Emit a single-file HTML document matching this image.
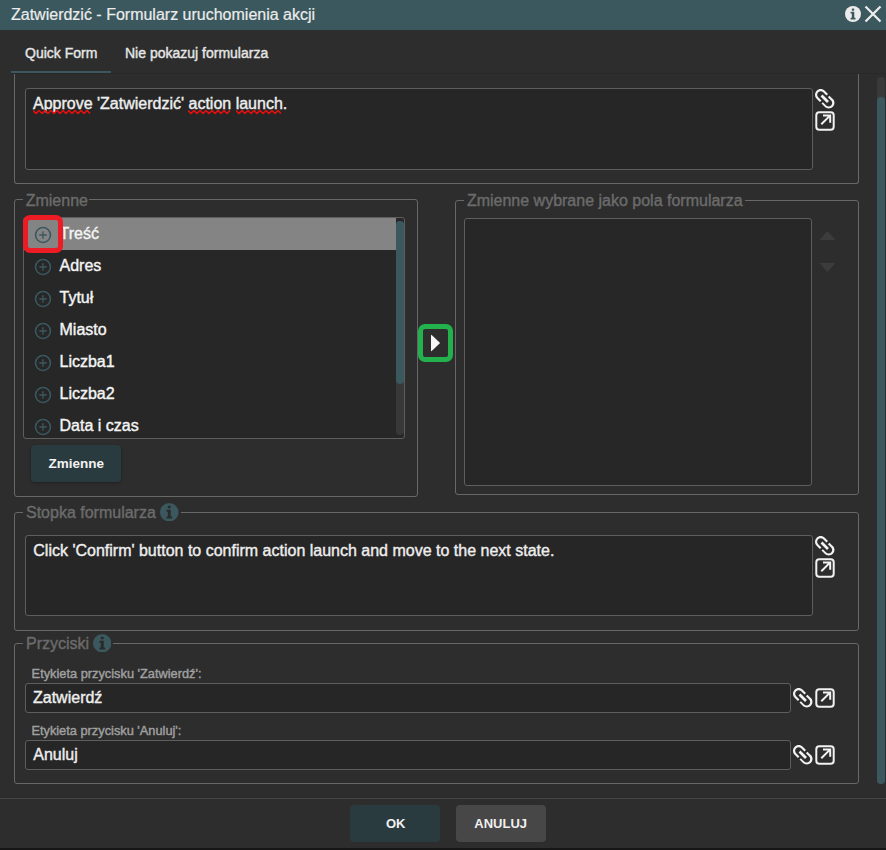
<!DOCTYPE html>
<html><head><meta charset="utf-8">
<style>
*{box-sizing:border-box;margin:0;padding:0}
html,body{width:886px;height:850px;overflow:hidden;background:#2d2d2d;font-family:"Liberation Sans",sans-serif}
body{position:relative}
.a{position:absolute;display:block}
.t{position:absolute;line-height:1;white-space:pre;-webkit-text-stroke:0.4px currentColor}
</style></head><body>
<div class="a" style="left:0px;top:0px;width:886px;height:30px;background:#3b585e"></div>
<div class="t" style="left:11px;top:7px;font-size:16px;color:#ececec;-webkit-text-stroke:0.2px">Zatwierdzić - Formularz uruchomienia akcji</div>
<svg class="a" style="left:845.0px;top:6.0px" width="16" height="16" viewBox="0 0 20 20"><circle cx="10" cy="10" r="10" fill="#ececec"/><g fill="#3b585e"><rect x="8.5" y="3" width="3" height="2.8" rx="0.6"/><path d="M7 7.3H11.6V14.6H13.1V16.8H7V14.6H8.5V9.4H7Z"/></g></svg>
<svg class="a" style="left:864px;top:5px" width="18" height="18" viewBox="0 0 18 18" stroke="#ececec" stroke-width="2.3"><path d="M1.5 1.5L16.5 16.5M16.5 1.5L1.5 16.5"/></svg>
<div class="t" style="left:25px;top:46px;font-size:14px;color:#e6e6e6;">Quick Form</div>
<div class="t" style="left:125px;top:46px;font-size:14px;color:#e6e6e6;">Nie pokazuj formularza</div>
<div class="a" style="left:11px;top:71px;width:100px;height:2px;background:#3b585e"></div>
<div class="a" style="left:11px;top:73px;width:875px;height:1px;background:#282828"></div>
<div class="a" style="left:14px;top:74px;width:845px;height:110px;border:1px solid #686868;border-top:none;border-radius:0 0 3px 3px"></div>
<div class="a" style="left:25px;top:88px;width:788px;height:82px;border:1px solid #5e5e5e;border-radius:3px;background:#262626;"></div>
<div class="t" style="left:33px;top:96px;font-size:16px;color:#eeeeee;">Approve 'Zatwierdzić' action launch.</div>
<svg class="a" style="left:33px;top:109.2px" width="61" height="6" viewBox="0 0 61 6"><path d="M0 1.5 L3 4.5 L6 1.5 L9 4.5 L12 1.5 L15 4.5 L18 1.5 L21 4.5 L24 1.5 L27 4.5 L30 1.5 L33 4.5 L36 1.5 L39 4.5 L42 1.5 L45 4.5 L48 1.5 L51 4.5 L54 1.5 L57 4.5" fill="none" stroke="#e8100f" stroke-width="1.6" stroke-linejoin="round"/></svg>
<svg class="a" style="left:188px;top:109.2px" width="46" height="6" viewBox="0 0 46 6"><path d="M0 1.5 L3 4.5 L6 1.5 L9 4.5 L12 1.5 L15 4.5 L18 1.5 L21 4.5 L24 1.5 L27 4.5 L30 1.5 L33 4.5 L36 1.5 L39 4.5 L42 1.5" fill="none" stroke="#e8100f" stroke-width="1.6" stroke-linejoin="round"/></svg>
<svg class="a" style="left:236px;top:109.2px" width="49" height="6" viewBox="0 0 49 6"><path d="M0 1.5 L3 4.5 L6 1.5 L9 4.5 L12 1.5 L15 4.5 L18 1.5 L21 4.5 L24 1.5 L27 4.5 L30 1.5 L33 4.5 L36 1.5 L39 4.5 L42 1.5 L45 4.5" fill="none" stroke="#e8100f" stroke-width="1.6" stroke-linejoin="round"/></svg>
<svg class="a" style="left:811.25px;top:85.25px" width="27.5" height="27.5" viewBox="0 0 24 24"><g transform="rotate(45 12 12)" fill="#f2f2f2"><path d="M3.9 12c0-1.71 1.39-3.1 3.1-3.1h4V7H7c-2.76 0-5 2.24-5 5s2.24 5 5 5h4v-1.9H7c-1.71 0-3.1-1.39-3.1-3.1zM8 13.2h8v-2.4H8v2.4zm9-6h-4v1.9h4c1.71 0 3.1 1.39 3.1 3.1s-1.39 3.1-3.1 3.1h-4V17h4c2.76 0 5-2.24 5-5s-2.24-5-5-5z"/></g></svg>
<svg class="a" style="left:815px;top:111px" width="20" height="20" viewBox="0 0 20 20" fill="none" stroke="#f2f2f2" stroke-width="2"><rect x="1.3" y="1.3" width="17.4" height="17.4" rx="3"/><path d="M6.3 13.3L15 4.6M8 4.6H15.2V11.8" stroke-width="2"/></svg>
<div class="a" style="left:14px;top:199px;width:404px;height:298px;border:1px solid #686868;border-radius:3px;"></div>
<div class="a" style="left:23px;top:194px;width:66px;height:13px;background:#2d2d2d"></div>
<div class="t" style="left:25.7px;top:193px;font-size:16px;color:#6b6b6b;">Zmienne</div>
<div class="a" style="left:23px;top:217px;width:382px;height:222px;border:1px solid #5e5e5e;border-radius:3px;background:#262626;background:#272727"></div>
<div class="a" style="left:24px;top:218px;width:372px;height:32px;background:#848484"></div>
<svg class="a" style="left:34.1px;top:225.6px" width="18" height="18" viewBox="0 0 18 18" fill="none" stroke="#3b585e" stroke-width="1.6"><circle cx="9" cy="9" r="7.45"/><path d="M5.2 9H12.8M9 5.2V12.8" stroke-width="1.35"/></svg>
<div class="t" style="left:59.5px;top:226px;font-size:16px;color:#f4f4f4;">Treść</div>
<svg class="a" style="left:34.1px;top:257.6px" width="18" height="18" viewBox="0 0 18 18" fill="none" stroke="#3b585e" stroke-width="1.6"><circle cx="9" cy="9" r="7.45"/><path d="M5.2 9H12.8M9 5.2V12.8" stroke-width="1.35"/></svg>
<div class="t" style="left:59.5px;top:258px;font-size:16px;color:#f4f4f4;">Adres</div>
<svg class="a" style="left:34.1px;top:289.6px" width="18" height="18" viewBox="0 0 18 18" fill="none" stroke="#3b585e" stroke-width="1.6"><circle cx="9" cy="9" r="7.45"/><path d="M5.2 9H12.8M9 5.2V12.8" stroke-width="1.35"/></svg>
<div class="t" style="left:59.5px;top:290px;font-size:16px;color:#f4f4f4;">Tytuł</div>
<svg class="a" style="left:34.1px;top:321.6px" width="18" height="18" viewBox="0 0 18 18" fill="none" stroke="#3b585e" stroke-width="1.6"><circle cx="9" cy="9" r="7.45"/><path d="M5.2 9H12.8M9 5.2V12.8" stroke-width="1.35"/></svg>
<div class="t" style="left:59.5px;top:322px;font-size:16px;color:#f4f4f4;">Miasto</div>
<svg class="a" style="left:34.1px;top:353.6px" width="18" height="18" viewBox="0 0 18 18" fill="none" stroke="#3b585e" stroke-width="1.6"><circle cx="9" cy="9" r="7.45"/><path d="M5.2 9H12.8M9 5.2V12.8" stroke-width="1.35"/></svg>
<div class="t" style="left:59.5px;top:354px;font-size:16px;color:#f4f4f4;">Liczba1</div>
<svg class="a" style="left:34.1px;top:385.6px" width="18" height="18" viewBox="0 0 18 18" fill="none" stroke="#3b585e" stroke-width="1.6"><circle cx="9" cy="9" r="7.45"/><path d="M5.2 9H12.8M9 5.2V12.8" stroke-width="1.35"/></svg>
<div class="t" style="left:59.5px;top:386px;font-size:16px;color:#f4f4f4;">Liczba2</div>
<svg class="a" style="left:34.1px;top:417.6px" width="18" height="18" viewBox="0 0 18 18" fill="none" stroke="#3b585e" stroke-width="1.6"><circle cx="9" cy="9" r="7.45"/><path d="M5.2 9H12.8M9 5.2V12.8" stroke-width="1.35"/></svg>
<div class="t" style="left:59.5px;top:418px;font-size:16px;color:#f4f4f4;">Data i czas</div>
<div class="a" style="left:396px;top:221px;width:8px;height:214px;background:#383838;border-radius:4px"></div>
<div class="a" style="left:396px;top:221px;width:8px;height:163px;background:#3b585e;border-radius:4px"></div>
<div class="a" style="left:23px;top:215px;width:40px;height:37.5px;border:5px solid #ed1c24;border-radius:7px"></div>
<div class="a" style="left:31px;top:445px;width:90px;height:37px;background:#2a3b3f;border-radius:4px;box-shadow:0 1px 3px rgba(0,0,0,.3)"></div>
<div class="t" style="left:48.5px;top:457px;font-size:13.5px;color:#f2f2f2;font-weight:bold;-webkit-text-stroke:0">Zmienne</div>
<div class="a" style="left:418px;top:324px;width:35px;height:38px;border:5px solid #22b14c;border-radius:7px"></div>
<svg class="a" style="left:429px;top:333px" width="13" height="20" viewBox="0 0 13 20"><path d="M2 2.2Q2 1.4 2.7 2L10.6 9.4Q11.2 10 10.6 10.6L2.7 18Q2 18.6 2 17.8Z" fill="#f6f6f6"/></svg>
<div class="a" style="left:455px;top:200px;width:404px;height:295px;border:1px solid #686868;border-radius:3px;"></div>
<div class="a" style="left:464px;top:194px;width:281px;height:13px;background:#2d2d2d"></div>
<div class="t" style="left:466.9px;top:193px;font-size:16px;color:#6b6b6b;">Zmienne wybrane jako pola formularza</div>
<div class="a" style="left:464px;top:218px;width:348px;height:268px;border:1px solid #5e5e5e;border-radius:3px;background:#262626;background:#272727"></div>
<svg class="a" style="left:819px;top:230px" width="17" height="43" viewBox="0 0 17 43" fill="#3c3c3c"><path d="M0.5 10L8.5 1L16.5 10Z"/><path d="M0.5 33L8.5 42L16.5 33Z"/></svg>
<div class="a" style="left:14px;top:512px;width:845px;height:119px;border:1px solid #686868;border-radius:3px;"></div>
<div class="a" style="left:23px;top:502px;width:158px;height:20px;background:#2d2d2d"></div>
<div class="t" style="left:26px;top:505px;font-size:16px;color:#6b6b6b;">Stopka formularza</div>
<svg class="a" style="left:160.05px;top:502.65px" width="18.5" height="18.5" viewBox="0 0 20 20"><circle cx="10" cy="10" r="10" fill="#3b585e"/><g fill="#2a2a2a"><rect x="8.5" y="3" width="3" height="2.8" rx="0.6"/><path d="M7 7.3H11.6V14.6H13.1V16.8H7V14.6H8.5V9.4H7Z"/></g></svg>
<div class="a" style="left:25px;top:535px;width:788px;height:81px;border:1px solid #5e5e5e;border-radius:3px;background:#262626;"></div>
<div class="t" style="left:33.3px;top:543px;font-size:16px;color:#eeeeee;">Click 'Confirm' button to confirm action launch and move to the next state.</div>
<svg class="a" style="left:811.25px;top:532.25px" width="27.5" height="27.5" viewBox="0 0 24 24"><g transform="rotate(45 12 12)" fill="#f2f2f2"><path d="M3.9 12c0-1.71 1.39-3.1 3.1-3.1h4V7H7c-2.76 0-5 2.24-5 5s2.24 5 5 5h4v-1.9H7c-1.71 0-3.1-1.39-3.1-3.1zM8 13.2h8v-2.4H8v2.4zm9-6h-4v1.9h4c1.71 0 3.1 1.39 3.1 3.1s-1.39 3.1-3.1 3.1h-4V17h4c2.76 0 5-2.24 5-5s-2.24-5-5-5z"/></g></svg>
<svg class="a" style="left:815px;top:558px" width="20" height="20" viewBox="0 0 20 20" fill="none" stroke="#f2f2f2" stroke-width="2"><rect x="1.3" y="1.3" width="17.4" height="17.4" rx="3"/><path d="M6.3 13.3L15 4.6M8 4.6H15.2V11.8" stroke-width="2"/></svg>
<div class="a" style="left:14px;top:643px;width:845px;height:141px;border:1px solid #686868;border-radius:3px;"></div>
<div class="a" style="left:23px;top:633px;width:90px;height:20px;background:#2d2d2d"></div>
<div class="t" style="left:26px;top:636px;font-size:16px;color:#6b6b6b;">Przyciski</div>
<svg class="a" style="left:92.75px;top:633.75px" width="18.5" height="18.5" viewBox="0 0 20 20"><circle cx="10" cy="10" r="10" fill="#3b585e"/><g fill="#2a2a2a"><rect x="8.5" y="3" width="3" height="2.8" rx="0.6"/><path d="M7 7.3H11.6V14.6H13.1V16.8H7V14.6H8.5V9.4H7Z"/></g></svg>
<div class="t" style="left:31.6px;top:668px;font-size:12.8px;color:#a0a0a0;">Etykieta przycisku 'Zatwierdź':</div>
<div class="a" style="left:25px;top:683px;width:766px;height:30px;border:1px solid #5e5e5e;border-radius:3px;background:#262626;"></div>
<div class="t" style="left:33px;top:690px;font-size:16px;color:#eeeeee;">Zatwierdź</div>
<svg class="a" style="left:789.25px;top:684.25px" width="27.5" height="27.5" viewBox="0 0 24 24"><g transform="rotate(45 12 12)" fill="#f2f2f2"><path d="M3.9 12c0-1.71 1.39-3.1 3.1-3.1h4V7H7c-2.76 0-5 2.24-5 5s2.24 5 5 5h4v-1.9H7c-1.71 0-3.1-1.39-3.1-3.1zM8 13.2h8v-2.4H8v2.4zm9-6h-4v1.9h4c1.71 0 3.1 1.39 3.1 3.1s-1.39 3.1-3.1 3.1h-4V17h4c2.76 0 5-2.24 5-5s-2.24-5-5-5z"/></g></svg>
<svg class="a" style="left:815px;top:688px" width="20" height="20" viewBox="0 0 20 20" fill="none" stroke="#f2f2f2" stroke-width="2"><rect x="1.3" y="1.3" width="17.4" height="17.4" rx="3"/><path d="M6.3 13.3L15 4.6M8 4.6H15.2V11.8" stroke-width="2"/></svg>
<div class="t" style="left:31.4px;top:725px;font-size:12.8px;color:#a0a0a0;">Etykieta przycisku 'Anuluj':</div>
<div class="a" style="left:25px;top:740px;width:766px;height:30px;border:1px solid #5e5e5e;border-radius:3px;background:#262626;"></div>
<div class="t" style="left:33.3px;top:747px;font-size:16px;color:#eeeeee;">Anuluj</div>
<svg class="a" style="left:789.25px;top:741.25px" width="27.5" height="27.5" viewBox="0 0 24 24"><g transform="rotate(45 12 12)" fill="#f2f2f2"><path d="M3.9 12c0-1.71 1.39-3.1 3.1-3.1h4V7H7c-2.76 0-5 2.24-5 5s2.24 5 5 5h4v-1.9H7c-1.71 0-3.1-1.39-3.1-3.1zM8 13.2h8v-2.4H8v2.4zm9-6h-4v1.9h4c1.71 0 3.1 1.39 3.1 3.1s-1.39 3.1-3.1 3.1h-4V17h4c2.76 0 5-2.24 5-5s-2.24-5-5-5z"/></g></svg>
<svg class="a" style="left:815px;top:745px" width="20" height="20" viewBox="0 0 20 20" fill="none" stroke="#f2f2f2" stroke-width="2"><rect x="1.3" y="1.3" width="17.4" height="17.4" rx="3"/><path d="M6.3 13.3L15 4.6M8 4.6H15.2V11.8" stroke-width="2"/></svg>
<div class="a" style="left:877px;top:77px;width:8px;height:707px;background:#393939;border-radius:4px"></div>
<div class="a" style="left:877px;top:97px;width:8px;height:687px;background:#3b585e;border-radius:4px"></div>
<div class="a" style="left:0px;top:798px;width:886px;height:1px;background:#454545"></div>
<div class="a" style="left:350px;top:805px;width:90px;height:37px;background:#2a3b3f;border-radius:4px"></div>
<div class="t" style="left:386px;top:817px;font-size:13px;color:#f0f0f0;font-weight:bold;-webkit-text-stroke:0">OK</div>
<div class="a" style="left:456px;top:805px;width:90px;height:37px;background:#474747;border-radius:4px"></div>
<div class="t" style="left:474.3px;top:817px;font-size:13px;color:#f0f0f0;font-weight:bold;-webkit-text-stroke:0">ANULUJ</div>
<div class="a" style="left:0px;top:848px;width:886px;height:2px;background:#161616"></div>
</body></html>
